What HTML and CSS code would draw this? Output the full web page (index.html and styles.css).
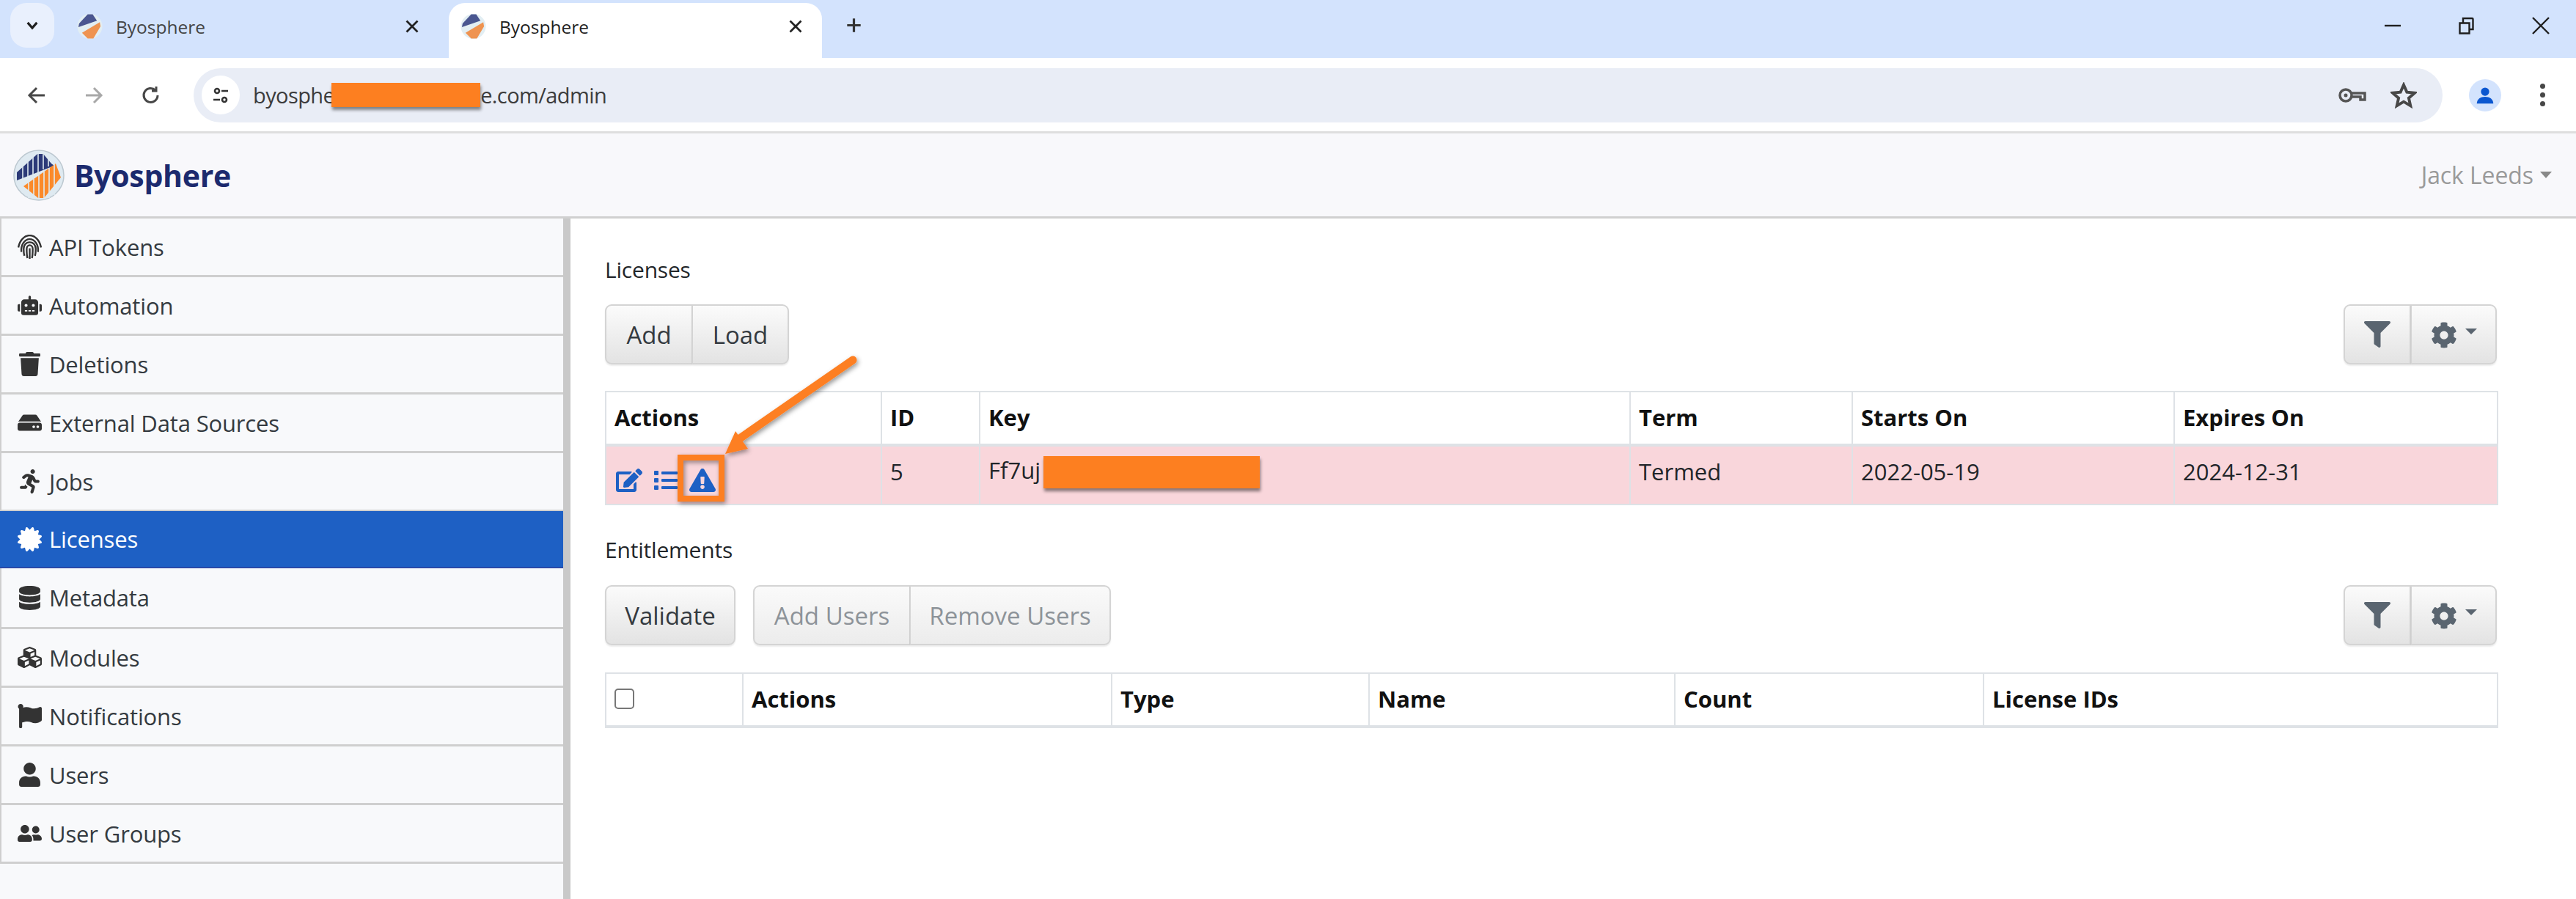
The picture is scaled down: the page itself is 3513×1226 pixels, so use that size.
FILE: index.html
```html
<!DOCTYPE html>
<html lang="en">
<head>
<meta charset="utf-8">
<title>Byosphere</title>
<link rel="stylesheet" href="styles.css">
</head>
<body>
<svg class="defs" width="0" height="0" aria-hidden="true">
  <defs>
    <symbol id="logo" viewBox="0 0 70 70">
      <circle cx="35" cy="35" r="34" fill="#dfeaf1" stroke="#bcc8d0" stroke-width="1.5"/>
      <path d="M5 42 L5 31 L33 6 L41 6 L52 19 L56 22 Z" fill="#2c3a78"/>
      <path d="M65 38 L58 19 L14 50 L34 66 L42 66 Z" fill="#fb8a2a"/>
      <path d="M13 44V20M20 40V14M27 36V8M34 32V4M41 27V4M48 23V10M21 66V44M28 66V40M35 68V35M42 68V30M49 66V25M56 62V20" stroke="#dfeaf1" stroke-width="1.6" fill="none"/>
    </symbol>
    <symbol id="fav" viewBox="0 0 36 36">
      <circle cx="18" cy="18" r="17.500" fill="#e2eef3"/>
      <path d="M2 19 L3 14 L15 1 L22 1 L28 10 Z" fill="#4a5690"/>
      <path d="M33 18 L32 12 L7 27 L15 35 L23 35 Z" fill="#ef9350"/>
    </symbol>
  </defs>
</svg>

<header class="tabstrip">
  <button class="tab-search"><svg class="ico-chev" viewBox="0 0 20 14"><path d="M3 3l7 8 7-8" /></svg></button>
  <div class="tab">
    <svg class="favicon"><use href="#fav"/></svg><span class="tab-title">Byosphere</span>
    <svg class="tab-x" viewBox="0 0 16 16"><path d="M2 2l12 12M14 2L2 14"/></svg>
  </div>
  <div class="tab tab-active">
    <svg class="favicon"><use href="#fav"/></svg><span class="tab-title">Byosphere</span>
    <svg class="tab-x" viewBox="0 0 16 16"><path d="M2 2l12 12M14 2L2 14"/></svg>
  </div>
  <svg class="tab-new" viewBox="0 0 20 20"><path d="M10 2v16M2 10h16"/></svg>
  <div class="win-controls">
    <svg class="win-ico" viewBox="0 0 24 24"><path d="M1 12h22"/></svg>
    <svg class="win-ico" viewBox="0 0 24 24"><path d="M2.500 8.500h13v14h-13zM7 8V2h12.500a1 1 0 0 1 1 1v14H16"/></svg>
    <svg class="win-ico" viewBox="0 0 24 24"><path d="M1 1l22 22M23 1L1 23"/></svg>
  </div>
</header>

<div class="toolbar">
  <svg class="nav-ico" viewBox="0 0 28 28"><path d="M25 14H5M14 4L4 14l10 10"/></svg>
  <svg class="nav-ico nav-off" viewBox="0 0 28 28"><path d="M3 14h20M14 4l10 10-10 10"/></svg>
  <svg class="nav-ico" viewBox="0 0 28 28"><path d="M23 14a9.500 9.500 0 1 1-3-7M21 2v6h-6"/></svg>
  <div class="omnibox">
    <span class="site-chip"><svg class="tune" viewBox="0 0 24 24"><circle cx="7" cy="6" r="3"/><path d="M13 6h9M2 18h9"/><circle cx="17" cy="18" r="3"/></svg></span>
    <span class="url">byosphe<span class="redact redact-url"></span>e.com/admin</span>
    <svg class="omni-key" viewBox="0 0 40 24"><circle cx="11" cy="12" r="8"/><circle cx="11" cy="12" r="2.500" class="key-dot"/><path d="M19 9h18v9h-6v-4H19"/></svg>
    <svg class="omni-star" viewBox="0 0 24 24"><path d="M12 2.500l2.900 6.600 7.100.7-5.400 4.700 1.600 7L12 17.800l-6.200 3.700 1.600-7L2 9.800l7.100-.7z"/></svg>
  </div>
  <span class="avatar"><svg viewBox="0 0 24 24"><circle cx="12" cy="8" r="4.500"/><path d="M3 21c0-5 4-7.500 9-7.500s9 2.500 9 7.500z"/></svg></span>
  <span class="kebab"><i></i><i></i><i></i></span>
</div>

<div class="app-bar">
  <svg class="brand-logo"><use href="#logo"/></svg>
  <span class="brand-name">Byosphere</span>
  <span class="user-menu">Jack Leeds<i class="caret"></i></span>
</div>

<div class="app-body">
  <nav class="sidebar">
    <a class="nav-item"><svg class="nav-icon" viewBox="0 0 32 32"><g fill="none" stroke="currentColor" stroke-width="2.300"><path d="M1 17C3 6 10 1 16 1s13 5 15 16"/><path d="M5 23c-1-9 4-17 11-17s12 8 11 17"/><path d="M9 28c-1-3-1-6-1-9 0-5 3-9 8-9s8 4 8 9c0 3 0 6-1 9"/><path d="M13 31c-1-4-1-8-1-12 0-3 2-5 4-5s4 2 4 5c0 4 0 8-1 12"/><path d="M16 18v14"/></g></svg>API Tokens</a>
    <a class="nav-item"><svg class="nav-icon" viewBox="0 0 640 512"><path d="M32,224H64V416H32A31.96166,31.96166,0,0,1,0,384V256A31.96166,31.96166,0,0,1,32,224Zm512-48V448a64.06328,64.06328,0,0,1-64,64H160a64.06328,64.06328,0,0,1-64-64V176a79.974,79.974,0,0,1,80-80H288V32a32,32,0,0,1,64,0V96H464A79.974,79.974,0,0,1,544,176ZM264,256a40,40,0,1,0-40,40A39.997,39.997,0,0,0,264,256Zm-8,128H192v32h64Zm96,0H288v32h64ZM456,256a40,40,0,1,0-40,40A39.997,39.997,0,0,0,456,256Zm-8,128H384v32h64ZM640,256V384a31.96166,31.96166,0,0,1-32,32H576V224h32A31.96166,31.96166,0,0,1,640,256Z"/></svg>Automation</a>
    <a class="nav-item"><svg class="nav-icon" viewBox="0 0 448 512"><path d="M432 32H312l-9.400-18.700A24 24 0 0 0 281.100 0H166.800a23.720 23.720 0 0 0-21.400 13.300L136 32H16A16 16 0 0 0 0 48v32a16 16 0 0 0 16 16h416a16 16 0 0 0 16-16V48a16 16 0 0 0-16-16zM53.200 467a48 48 0 0 0 47.900 45h245.800a48 48 0 0 0 47.900-45L416 128H32z"/></svg>Deletions</a>
    <a class="nav-item"><svg class="nav-icon" viewBox="0 0 576 512"><path d="M576 304v96c0 26.510-21.490 48-48 48H48c-26.510 0-48-21.490-48-48v-96c0-26.510 21.490-48 48-48h480c26.510 0 48 21.490 48 48zm-48-80a79.557 79.557 0 0 1 30.777 6.165L462.250 85.374A48.003 48.003 0 0 0 422.311 64H153.689a48 48 0 0 0-39.938 21.374L17.223 230.165A79.557 79.557 0 0 1 48 224h480zm-48 96c-17.673 0-32 14.327-32 32s14.327 32 32 32 32-14.327 32-32-14.327-32-32-32zm-96 0c-17.673 0-32 14.327-32 32s14.327 32 32 32 32-14.327 32-32-14.327-32-32-32z"/></svg>External Data Sources</a>
    <a class="nav-item"><svg class="nav-icon" viewBox="0 0 416 512"><path d="M272 96c26.510 0 48-21.490 48-48S298.510 0 272 0s-48 21.490-48 48 21.490 48 48 48zM113.690 317.470l-14.800 34.520H32c-17.670 0-32 14.330-32 32s14.330 32 32 32h77.450c19.250 0 36.580-11.440 44.110-29.090l8.790-20.520-10.670-6.300c-17.320-10.230-30.060-25.370-37.990-42.610zM384 223.990h-44.030l-26.060-53.250c-12.500-25.550-35.450-44.230-61.780-50.940l-71.080-21.140c-28.300-6.800-57.770-.55-80.840 17.140l-39.670 30.410c-14.030 10.750-16.690 30.830-5.920 44.860s30.840 16.660 44.860 5.920l39.690-30.410c7.670-5.890 17.440-8 25.270-6.140l14.700 4.370-37.460 87.390c-12.620 29.480-1.310 64.010 26.300 80.310l84.980 50.170-27.470 87.730c-5.280 16.860 4.110 34.810 20.970 40.090 3.190 1 6.410 1.480 9.580 1.480 13.610 0 26.230-8.770 30.520-22.450l31.640-101.060c5.910-20.770-2.890-43.080-21.640-54.390l-61.240-36.140 31.310-78.280 20.270 41.430c8 16.340 24.920 26.890 43.110 26.890H384c17.670 0 32-14.330 32-32s-14.330-31.990-32-31.990z"/></svg>Jobs</a>
    <a class="nav-item nav-active"><svg class="nav-icon" viewBox="0 0 512 512"><path d="M458.622 255.920l45.985-45.005c13.708-12.977 7.316-36.039-10.664-40.339l-62.650-15.990 17.661-62.015c4.991-17.838-11.829-34.663-29.661-29.671l-61.994 17.667-15.984-62.671C337.085.197 313.765-6.276 300.990 7.228L256 53.570 211.011 7.229c-12.630-13.351-36.047-7.234-40.325 10.668l-15.984 62.671-61.995-17.667C74.870 57.907 58.056 74.738 63.046 92.572l17.661 62.015-62.650 15.990C.069 174.878-6.310 197.944 7.392 210.915l45.985 45.005-45.985 45.004c-13.708 12.977-7.316 36.039 10.664 40.339l62.650 15.990-17.661 62.015c-4.991 17.838 11.829 34.663 29.661 29.671l61.994-17.667 15.984 62.671c4.439 18.575 27.696 24.018 40.325 10.668L256 458.610l44.989 46.001c12.500 13.488 35.987 7.486 40.325-10.668l15.984-62.671 61.994 17.667c17.836 4.994 34.651-11.837 29.661-29.671l-17.661-62.015 62.650-15.990c17.987-4.302 24.366-27.367 10.664-40.339l-45.984-45.004z"/></svg>Licenses</a>
    <a class="nav-item"><svg class="nav-icon" viewBox="0 0 448 512"><path d="M448 73.143v45.714C448 159.143 347.667 192 224 192S0 159.143 0 118.857V73.143C0 32.857 100.333 0 224 0s224 32.857 224 73.143zM448 176v102.857C448 319.143 347.667 352 224 352S0 319.143 0 278.857V176c48.125 33.143 136.208 48.572 224 48.572S399.874 209.143 448 176zm0 160v102.857C448 479.143 347.667 512 224 512S0 479.143 0 438.857V336c48.125 33.143 136.208 48.572 224 48.572S399.874 369.143 448 336z"/></svg>Metadata</a>
    <a class="nav-item"><svg class="nav-icon" viewBox="0 0 512 512"><path d="M488.600 250.200L392 214V105.500c0-15-9.300-28.400-23.400-33.700l-100-37.500c-8.100-3.100-17.100-3.100-25.300 0l-100 37.500c-14.100 5.300-23.400 18.700-23.400 33.700V214l-96.600 36.200C9.300 255.500 0 268.900 0 283.900V394c0 13.600 7.700 26.100 19.900 32.200l100 50c10.100 5.100 22.100 5.100 32.200 0l103.900-52 103.900 52c10.100 5.100 22.100 5.100 32.200 0l100-50c12.200-6.100 19.900-18.600 19.900-32.200V283.900c0-15-9.300-28.400-23.400-33.700zM358 214.800l-85 31.900v-68.200l85-37v73.300zM154 104.100l102-38.200 102 38.200v.6l-102 41.400-102-41.400v-.6zm84 291.100l-85 42.500v-79.100l85-38.800v75.400zm0-112l-102 41.400-102-41.400v-.6l102-38.200 102 38.200v.6zm240 112l-85 42.500v-79.100l85-38.800v75.400zm0-112l-102 41.400-102-41.400v-.6l102-38.200 102 38.200v.6z"/></svg>Modules</a>
    <a class="nav-item"><svg class="nav-icon" viewBox="0 0 512 512"><path d="M349.565 98.783C295.978 98.783 251.721 64 184.348 64c-24.955 0-47.309 4.384-68.045 12.013a55.947 55.947 0 0 0 3.586-23.562C118.117 24.015 94.806 1.206 66.338.048 34.345-1.254 8 24.296 8 56c0 19.026 9.497 35.825 24 45.945V488c0 13.255 10.745 24 24 24h16c13.255 0 24-10.745 24-24v-94.400c28.311-12.064 63.582-22.122 114.435-22.122 53.588 0 97.844 34.783 165.217 34.783 48.169 0 86.667-16.294 122.505-40.858C506.840 359.452 512 349.571 512 339.045v-243.100c0-23.393-24.269-38.870-45.485-29.016-34.338 15.948-76.454 31.854-116.950 31.854z"/></svg>Notifications</a>
    <a class="nav-item"><svg class="nav-icon" viewBox="0 0 448 512"><path d="M224 256c70.700 0 128-57.300 128-128S294.700 0 224 0 96 57.300 96 128s57.300 128 128 128zm89.600 32h-16.700c-22.200 10.200-46.900 16-72.900 16s-50.600-5.800-72.900-16h-16.700C60.200 288 0 348.200 0 422.400V464c0 26.500 21.500 48 48 48h352c26.500 0 48-21.500 48-48v-41.600c0-74.200-60.200-134.400-134.400-134.400z"/></svg>Users</a>
    <a class="nav-item"><svg class="nav-icon" viewBox="0 0 640 512"><path d="M192 256c61.900 0 112-50.100 112-112S253.900 32 192 32 80 82.100 80 144s50.100 112 112 112zm76.800 32h-8.300c-20.800 10-43.900 16-68.500 16s-47.600-6-68.500-16h-8.300C51.600 288 0 339.600 0 403.200V432c0 26.500 21.500 48 48 48h288c26.500 0 48-21.500 48-48v-28.800c0-63.600-51.600-115.200-115.200-115.200zM480 256c53 0 96-43 96-96s-43-96-96-96-96 43-96 96 43 96 96 96zm48 32h-3.800c-13.900 4.800-28.600 8-44.200 8s-30.300-3.200-44.200-8H432c-20.400 0-39.200 5.900-55.700 15.400 24.400 26.300 39.700 61.200 39.700 99.800v38.400c0 2.200-.5 4.300-.6 6.400H592c26.500 0 48-21.500 48-48 0-61.900-50.100-112-112-112z"/></svg>User Groups</a>
  </nav>

  <main class="content">
    <section class="panel panel-licenses">
      <h2 class="panel-title">Licenses</h2>
      <div class="btn-row">
        <div class="btn-group">
          <button class="btn btn-add">Add</button>
          <button class="btn btn-load">Load</button>
        </div>
        <div class="tools">
          <button class="btn btn-filter"><svg class="tool-ico" viewBox="0 0 512 512"><path d="M487.976 0H24.028C2.710 0-8.047 25.866 7.058 40.971L192 225.941V432c0 7.831 3.821 15.170 10.237 19.662l80 55.980C298.020 518.690 320 507.493 320 487.980V225.941l184.947-184.970C520.021 25.896 509.338 0 487.976 0z"/></svg></button>
          <button class="btn btn-gear"><svg class="tool-ico" viewBox="0 0 512 512"><path d="M487.400 315.700l-42.600-24.600c4.300-23.200 4.300-47 0-70.200l42.600-24.600c4.900-2.800 7.100-8.600 5.500-14-11.100-35.600-30-67.800-54.700-94.600-3.800-4.100-10-5.100-14.800-2.300L380.800 110c-17.900-15.400-38.500-27.300-60.800-35.100V25.800c0-5.600-3.900-10.500-9.400-11.700-36.700-8.200-74.300-7.800-109.200 0-5.500 1.200-9.400 6.100-9.400 11.700V75c-22.200 7.900-42.800 19.800-60.800 35.100L88.700 85.500c-4.900-2.800-11-1.900-14.800 2.300-24.700 26.700-43.600 58.900-54.700 94.600-1.700 5.400.6 11.200 5.500 14L67.300 221c-4.300 23.200-4.300 47 0 70.200l-42.600 24.600c-4.900 2.800-7.100 8.600-5.500 14 11.100 35.600 30 67.800 54.700 94.600 3.800 4.100 10 5.100 14.800 2.300l42.600-24.600c17.900 15.400 38.500 27.300 60.800 35.100v49.200c0 5.600 3.900 10.500 9.400 11.700 36.700 8.200 74.300 7.800 109.200 0 5.500-1.200 9.400-6.100 9.400-11.700v-49.200c22.200-7.900 42.800-19.800 60.800-35.100l42.600 24.600c4.900 2.800 11 1.900 14.800-2.300 24.700-26.700 43.600-58.900 54.700-94.600 1.500-5.500-.7-11.300-5.600-14.100zM256 336c-44.100 0-80-35.900-80-80s35.900-80 80-80 80 35.900 80 80-35.900 80-80 80z"/></svg><i class="tool-caret"></i></button>
        </div>
      </div>
      <table class="grid grid-lic">
        <colgroup><col class="c1"><col class="c2"><col class="c3"><col class="c4"><col class="c5"><col class="c6"></colgroup>
        <thead><tr><th>Actions</th><th>ID</th><th>Key</th><th>Term</th><th>Starts On</th><th>Expires On</th></tr></thead>
        <tbody>
          <tr class="row-danger">
            <td><span class="acts">
              <svg class="act act-edit" viewBox="0 0 576 512"><path d="M402.600 83.200l90.200 90.200c3.800 3.800 3.800 10 0 13.800L274.400 405.600l-92.800 10.300c-12.400 1.400-22.900-9.100-21.500-21.500l10.300-92.800L388.800 83.200c3.800-3.800 10-3.800 13.800 0zm162-22.900l-48.800-48.800c-15.200-15.200-39.900-15.200-55.200 0l-35.400 35.400c-3.800 3.800-3.800 10 0 13.800l90.200 90.200c3.800 3.800 10 3.800 13.800 0l35.400-35.400c15.200-15.300 15.200-40 0-55.200zM384 346.200V448H64V128h229.800c3.200 0 6.200-1.300 8.500-3.500l40-40c7.600-7.600 2.200-20.500-8.500-20.500H48C21.500 64 0 85.500 0 112v352c0 26.500 21.500 48 48 48h352c26.500 0 48-21.500 48-48V306.200c0-10.700-12.900-16-20.500-8.500l-40 40c-2.200 2.300-3.500 5.300-3.500 8.500z"/></svg>
              <svg class="act act-list" viewBox="0 0 512 512"><path d="M80 368H16a16 16 0 0 0-16 16v64a16 16 0 0 0 16 16h64a16 16 0 0 0 16-16v-64a16 16 0 0 0-16-16zm0-320H16A16 16 0 0 0 0 64v64a16 16 0 0 0 16 16h64a16 16 0 0 0 16-16V64a16 16 0 0 0-16-16zm0 160H16a16 16 0 0 0-16 16v64a16 16 0 0 0 16 16h64a16 16 0 0 0 16-16v-64a16 16 0 0 0-16-16zm416 176H176a16 16 0 0 0-16 16v32a16 16 0 0 0 16 16h320a16 16 0 0 0 16-16v-32a16 16 0 0 0-16-16zm0-320H176a16 16 0 0 0-16 16v32a16 16 0 0 0 16 16h320a16 16 0 0 0 16-16V80a16 16 0 0 0-16-16zm0 160H176a16 16 0 0 0-16 16v32a16 16 0 0 0 16 16h320a16 16 0 0 0 16-16v-32a16 16 0 0 0-16-16z"/></svg>
              <svg class="act act-warn" viewBox="0 0 576 512"><path d="M569.517 440.013C587.975 472.007 564.806 512 527.940 512H48.054c-36.937 0-59.999-40.055-41.577-71.987L246.423 23.985c18.467-32.009 64.720-31.951 83.154 0l239.940 416.028zM288 354c-25.405 0-46 20.595-46 46s20.595 46 46 46 46-20.595 46-46-20.595-46-46-46zm-43.673-165.346l7.418 136c.347 6.364 5.609 11.346 11.982 11.346h48.546c6.373 0 11.635-4.982 11.982-11.346l7.418-136c.375-6.874-5.098-12.654-11.982-12.654h-63.383c-6.884 0-12.356 5.780-11.981 12.654z"/></svg>
            </span></td>
            <td>5</td>
            <td>Ff7uj<span class="redact redact-key"></span></td>
            <td>Termed</td>
            <td>2022-05-19</td>
            <td>2024-12-31</td>
          </tr>
        </tbody>
      </table>
    </section>

    <section class="panel panel-ent">
      <h2 class="panel-title">Entitlements</h2>
      <div class="btn-row">
        <div class="btn-left">
          <button class="btn btn-solo">Validate</button>
          <div class="btn-group">
            <button class="btn btn-off btn-addu">Add Users</button>
            <button class="btn btn-off btn-remu">Remove Users</button>
          </div>
        </div>
        <div class="tools">
          <button class="btn btn-filter"><svg class="tool-ico" viewBox="0 0 512 512"><path d="M487.976 0H24.028C2.710 0-8.047 25.866 7.058 40.971L192 225.941V432c0 7.831 3.821 15.170 10.237 19.662l80 55.980C298.020 518.690 320 507.493 320 487.980V225.941l184.947-184.970C520.021 25.896 509.338 0 487.976 0z"/></svg></button>
          <button class="btn btn-gear"><svg class="tool-ico" viewBox="0 0 512 512"><path d="M487.400 315.700l-42.600-24.600c4.300-23.200 4.300-47 0-70.200l42.600-24.600c4.900-2.800 7.100-8.600 5.500-14-11.100-35.600-30-67.800-54.700-94.600-3.800-4.100-10-5.100-14.800-2.300L380.800 110c-17.900-15.400-38.500-27.300-60.800-35.100V25.800c0-5.600-3.900-10.500-9.400-11.700-36.700-8.200-74.300-7.800-109.200 0-5.500 1.200-9.400 6.100-9.400 11.700V75c-22.200 7.900-42.800 19.800-60.800 35.100L88.700 85.500c-4.900-2.800-11-1.900-14.800 2.300-24.700 26.700-43.600 58.900-54.700 94.600-1.700 5.400.6 11.200 5.500 14L67.300 221c-4.300 23.200-4.300 47 0 70.200l-42.600 24.600c-4.900 2.800-7.100 8.600-5.500 14 11.100 35.600 30 67.800 54.700 94.600 3.800 4.100 10 5.100 14.800 2.300l42.600-24.600c17.900 15.400 38.500 27.300 60.800 35.100v49.200c0 5.600 3.900 10.500 9.400 11.700 36.700 8.200 74.300 7.800 109.200 0 5.500-1.200 9.400-6.100 9.400-11.700v-49.200c22.200-7.900 42.800-19.800 60.800-35.100l42.600 24.600c4.900 2.800 11 1.900 14.800-2.300 24.700-26.700 43.600-58.900 54.700-94.600 1.500-5.500-.7-11.300-5.600-14.100zM256 336c-44.100 0-80-35.900-80-80s35.900-80 80-80 80 35.900 80 80-35.900 80-80 80z"/></svg><i class="tool-caret"></i></button>
        </div>
      </div>
      <table class="grid grid-ent">
        <colgroup><col class="e1"><col class="e2"><col class="e3"><col class="e4"><col class="e5"><col class="e6"></colgroup>
        <thead><tr><th><span class="check"></span></th><th>Actions</th><th>Type</th><th>Name</th><th>Count</th><th>License IDs</th></tr></thead>
      </table>
    </section>
  </main>
</div>

<svg class="annotation" viewBox="0 0 3513 1226" aria-hidden="true">
  <defs><filter id="sh" x="-20%" y="-20%" width="140%" height="140%"><feDropShadow dx="2" dy="3" stdDeviation="3" flood-color="#000" flood-opacity=".4"/></filter></defs>
  <g filter="url(#sh)">
    <path d="M1163 491L1003 602" stroke="#fd7f23" stroke-width="11" stroke-linecap="round" fill="none"/>
    <path d="M989 619L1003 588L1020 612Z" fill="#fd7f23"/>
    <rect x="928" y="624" width="56" height="56" fill="none" stroke="#fd7f23" stroke-width="8"/>
  </g>
</svg>
</body>
</html>
```

FILE: styles.css
```css
* { box-sizing: border-box; }
html, body { margin: 0; padding: 0; }
body {
  position: relative;
  width: 3513px;
  height: 1226px;
  overflow: hidden;
  background: #fff;
  font-family: "Open Sans", "Liberation Sans", sans-serif;
  color: #212529;
}
.defs { position: absolute; }

/* browser chrome */
.tabstrip {
  height: 79px;
  background: #d3e3fd;
  display: flex;
  align-items: flex-end;
  padding-left: 14px;
}
.tab-search {
  width: 60px;
  height: 61px;
  margin-bottom: 14px;
  border: 0;
  border-radius: 22px;
  background: #e9f0fd;
  display: flex;
  align-items: center;
  justify-content: center;
  padding: 0;
}
.ico-chev { width: 18px; height: 13px; fill: none; stroke: #1f1f1f; stroke-width: 3.5; }
.tab {
  width: 509px;
  height: 75px;
  padding: 0 26px 11px 16px;
  margin-left: 15px;
  display: flex;
  align-items: center;
  font-size: 24.5px;
  color: #444;
}
.tab-active {
  margin-left: 14px;
  background: #fff;
  border-radius: 22px 22px 0 0;
  color: #1f1f1f;
}
.favicon { width: 35px; height: 36px; flex: none; }
.tab-title { margin-left: 18px; flex: 1; }
.tab-x { width: 20px; height: 20px; stroke: #222; stroke-width: 2.2; fill: none; }
.tab-new { width: 23px; height: 23px; stroke: #333; stroke-width: 2.8; fill: none; margin: 0 0 33px 32px; }
.win-controls {
  margin-left: auto;
  display: flex;
  gap: 77px;
  padding-right: 36px;
  align-self: flex-start;
  padding-top: 23px;
}
.win-ico { width: 24px; height: 24px; stroke: #1f1f1f; stroke-width: 2.4; fill: none; }

.toolbar {
  height: 103px;
  background: #fff;
  border-bottom: 3px solid #dedede;
  display: flex;
  align-items: center;
  padding: 1px 0 0 36px;
}
.nav-ico { width: 28px; height: 28px; stroke: #474747; stroke-width: 3; fill: none; margin-right: 50px; flex: none; }
.nav-off { stroke: #a8a8a8; }
.nav-ico:nth-child(3) { margin-right: 44px; }
.omnibox {
  width: 3067px;
  height: 74px;
  background: #e9edf6;
  border-radius: 37px;
  display: flex;
  align-items: center;
  padding: 0 35px 0 11px;
}
.site-chip {
  width: 52px;
  height: 53px;
  border-radius: 50%;
  background: #fff;
  display: flex;
  align-items: center;
  justify-content: center;
  flex: none;
}
.tune { width: 24px; height: 24px; fill: none; stroke: #333; stroke-width: 2.6; }
.url {
  margin-left: 18px;
  font-size: 29px;
  color: #3c3c3c;
  letter-spacing: -.6px;
  display: flex;
  align-items: center;
  white-space: nowrap;
  flex: 1;
}
.redact { display: inline-block; background: #fd7f20; box-shadow: 1px 4px 4px rgba(0,0,0,.45); }
.redact-url { width: 203px; height: 33px; margin-left: -4px; }
.omni-key { width: 40px; height: 24px; fill: none; stroke: #555; stroke-width: 3.5; margin-right: 32px; }
.key-dot { fill: #555; stroke: none; }
.omni-star { width: 36px; height: 36px; fill: none; stroke: #474747; stroke-width: 2.6; }
.avatar {
  width: 44px;
  height: 44px;
  margin-left: 36px;
  border-radius: 50%;
  background: #d3e3fd;
  display: flex;
  align-items: center;
  justify-content: center;
}
.avatar svg { width: 30px; height: 30px; fill: #0b57d0; }
.kebab { display: flex; flex-direction: column; gap: 5px; margin-left: 53px; }
.kebab i { width: 7px; height: 7px; border-radius: 50%; background: #474747; }

/* app bar */
.app-bar {
  height: 116px;
  background: #f8f8fb;
  border-bottom: 3px solid #d0d0d0;
  display: flex;
  align-items: center;
  padding-left: 18px;
}
.brand-logo { width: 70px; height: 70px; flex: none; }
.brand-name { margin-left: 13px; font-size: 41px; font-weight: 700; color: #1c2a6e; letter-spacing: -.3px; }
.user-menu { margin-left: auto; margin-right: 33px; font-size: 32px; color: #9a9a9a; display: flex; align-items: center; letter-spacing: -.1px; }
.caret { width: 0; height: 0; border: 8px solid transparent; border-top: 9px solid #888; border-bottom: 0; margin-left: 9px; }

/* sidebar + content */
.app-body { display: flex; height: 928px; }
.sidebar {
  width: 778px;
  flex: none;
  background: #f8f9fb;
  border-right: 10px solid #c9c9c9;
}
.nav-item {
  display: flex;
  align-items: center;
  height: 80px;
  padding-left: 22px;
  font-size: 31px;
  letter-spacing: -.15px;
  color: #343a40;
  border-left: 2px solid #cfcfcf;
  border-bottom: 3px solid #cfcfcf;
}
.nav-icon { width: 33px; height: 33px; fill: #333; color: #333; margin-right: 10px; flex: none; }
.nav-active {
  background: #1e60c4;
  color: #fff;
  height: 78px;
  margin-top: -1px;
  border-left: 0;
  border-bottom: 2px solid #2a4aa8;
  padding-left: 24px;
}
.nav-active .nav-icon { fill: #fff; }
.nav-active + .nav-item { height: 83px; }

.content { flex: 1; padding: 0 108px 0 47px; min-width: 0; }
.panel-title {
  margin: 0;
  font-size: 30px;
  font-weight: 400;
  letter-spacing: -.2px;
  line-height: 40px;
  color: #212529;
}
.panel-licenses { padding-top: 50px; }
.panel-ent { padding-top: 41px; }
.btn-row { display: flex; justify-content: space-between; margin-top: 27px; }
.panel-ent .btn-row { margin-top: 28px; }
.btn-left { display: flex; gap: 24px; }
.btn-group { display: flex; }
.tools { display: flex; }
.btn {
  height: 82px;
  padding: 0;
  font-family: inherit;
  font-size: 33px;
  color: #343a40;
  background: linear-gradient(#fbfbfb, #e3e3e3);
  border: 2px solid #d4d4d4;
  border-radius: 9px;
  box-shadow: 0 2px 2px rgba(0,0,0,.08);
  display: flex;
  align-items: center;
  justify-content: center;
}
.btn-add { width: 119px; border-radius: 9px 0 0 9px; border-right-width: 1px; }
.btn-load { width: 132px; border-radius: 0 9px 9px 0; border-left-width: 1px; }
.btn-solo { width: 178px; }
.btn-off { color: #8d9399; background: linear-gradient(#fafafa, #ececec); }
.btn-addu { width: 214px; border-radius: 9px 0 0 9px; border-right-width: 1px; }
.btn-remu { width: 274px; border-radius: 0 9px 9px 0; border-left-width: 1px; }
.btn-filter { width: 92px; border-radius: 9px 0 0 9px; }
.btn-gear { width: 117px; border-radius: 0 9px 9px 0; border-left-width: 1px; }
.tool-ico { width: 36px; height: 36px; fill: #5a6570; }
.btn-gear .tool-ico { margin-top: 2px; }
.tool-caret { width: 0; height: 0; border: 8px solid transparent; border-top: 8px solid #5a6570; border-bottom: 0; margin: 0 0 8px 11px; }

.grid {
  width: 2580px;
  table-layout: fixed;
  border-collapse: collapse;
  margin-top: 36px;
  font-size: 31px;
}
.panel-ent .grid { margin-top: 37px; }
.grid th, .grid td {
  border: 2px solid #dee2e6;
  text-align: left;
  padding: 0 0 0 11px;
  color: #212529;
}
.grid th { height: 73px; font-weight: 700; color: #111; border-bottom-width: 4px; padding-bottom: 3px; }
.grid td { height: 81px; padding-bottom: 10px; }
.row-danger { background: #f9d6db; }
.c1 { width: 376px; } .c2 { width: 134px; } .c3 { width: 887px; }
.c4 { width: 303px; } .c5 { width: 439px; } .c6 { width: 441px; }
.e1 { width: 187px; } .e2 { width: 503px; } .e3 { width: 351px; }
.e4 { width: 417px; } .e5 { width: 421px; } .e6 { width: 701px; }
.acts { display: flex; gap: 14px; align-items: center; margin-top: 24px; padding-left: 2px; }
.act { height: 32px; fill: #1e60c4; flex: none; }
.act-edit { width: 36px; }
.act-list { width: 36px; }
.act-warn { width: 36px; }
.redact-key { width: 295px; height: 44px; vertical-align: middle; margin-left: 4px; }
.check { display: block; width: 27px; height: 28px; border: 2px solid #777; border-radius: 5px; background: #fff; }

.annotation { position: absolute; left: 0; top: 0; width: 3513px; height: 1226px; pointer-events: none; }
```
